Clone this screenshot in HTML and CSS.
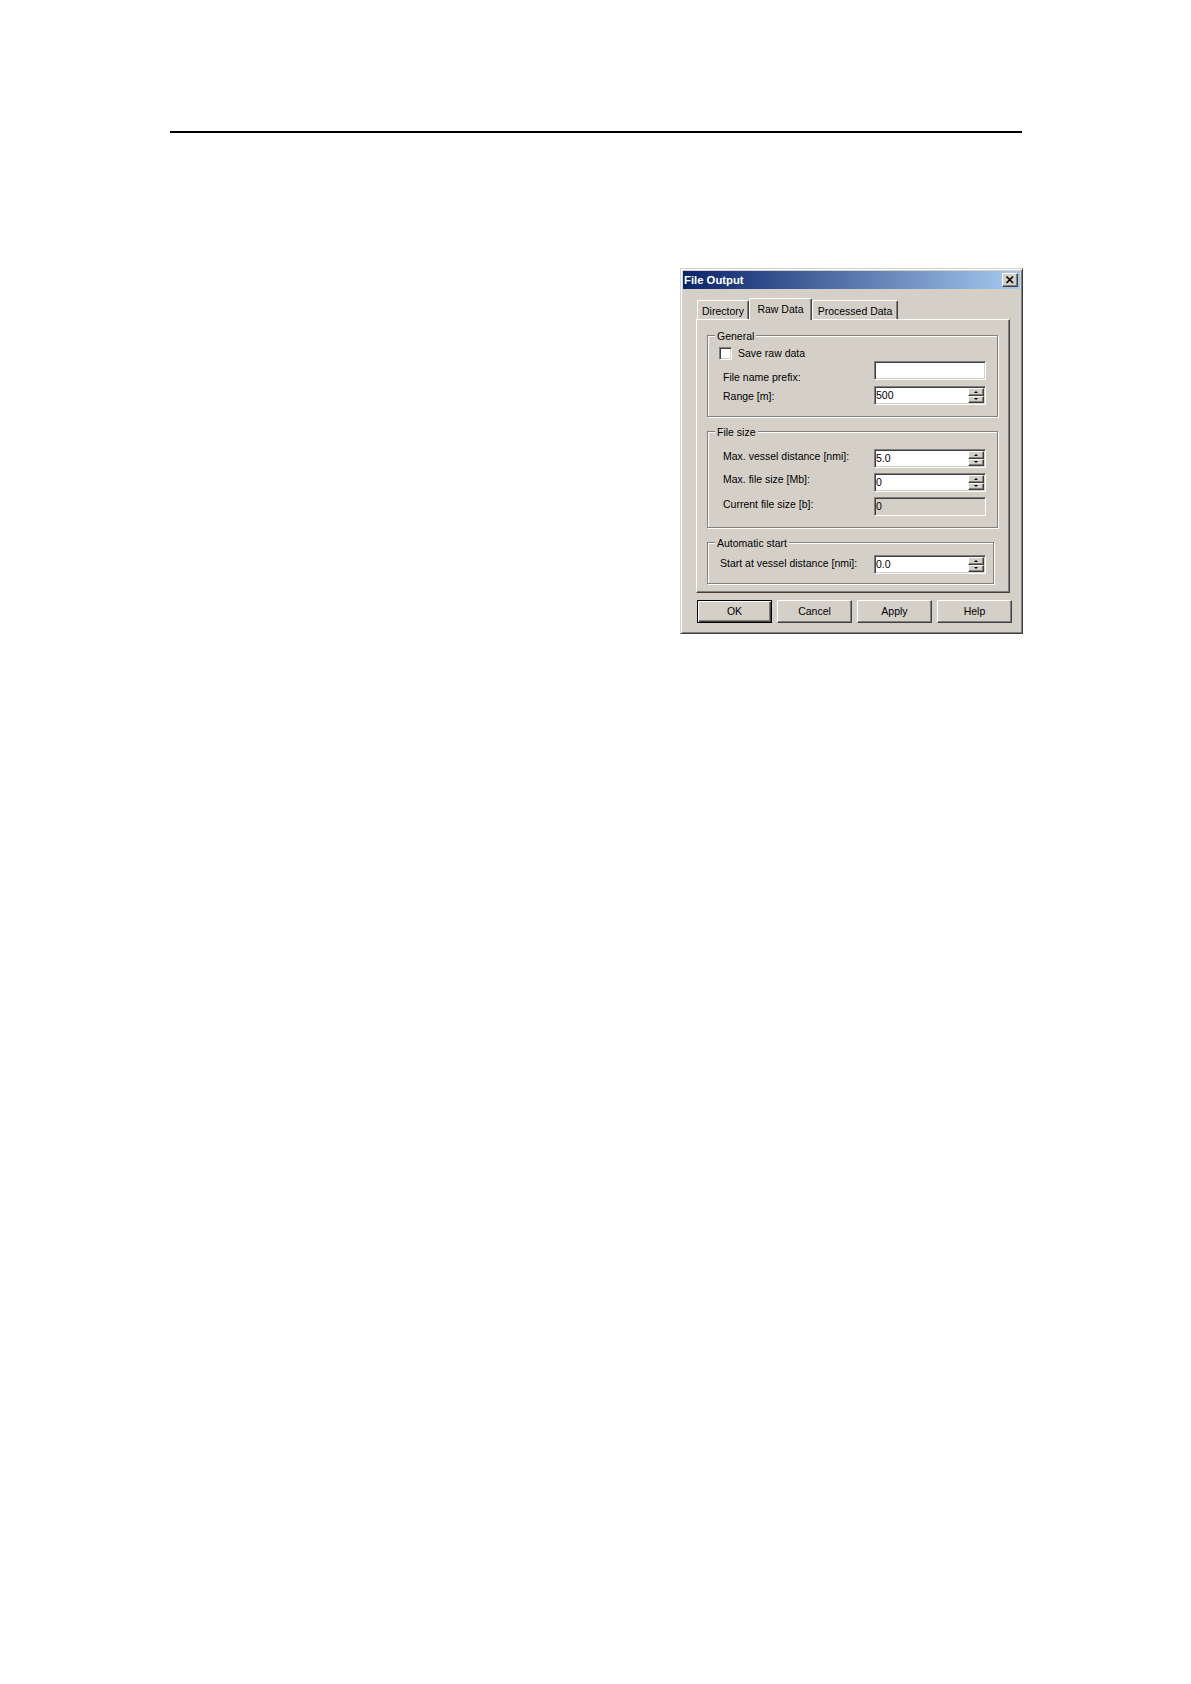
FILE: index.html
```html
<!DOCTYPE html>
<html lang="en">
<head>
<meta charset="utf-8">
<title>File Output</title>
<link rel="stylesheet" href="styles.css">
</head>
<body>
<div class="rule"></div>
<div class="dialog">
  <div class="titlebar">
    <span class="title">File Output</span>
    <span class="close"><svg width="16" height="14" viewBox="0 0 16 14"><path d="M4.5 3.5 L11 10 M11 3.5 L4.5 10" stroke="#000" stroke-width="1.7" fill="none"/></svg></span>
  </div>
  <div class="tabs">
    <div class="tab t-dir">Directory</div>
    <div class="tab active t-raw">Raw Data</div>
    <div class="tab t-proc">Processed Data</div>
  </div>
  <div class="panel">
    <div class="group g-general">
      <div class="legend">General</div>
      <div class="row r-check"><span class="checkbox"></span><span class="lbl chk-lbl">Save raw data</span></div>
      <div class="row r-prefix"><span class="lbl off10">File name prefix:</span><div class="field"><span class="val"></span></div></div>
      <div class="row r-range"><span class="lbl off4">Range [m]:</span><div class="field"><span class="val">500</span><div class="spin"><span class="sb up"><i></i></span><span class="sb down"><i></i></span></div></div></div>
    </div>
    <div class="group g-size">
      <div class="legend">File size</div>
      <div class="row r-vessel"><span class="lbl off1">Max. vessel distance [nmi]:</span><div class="field"><span class="val">5.0</span><div class="spin"><span class="sb up"><i></i></span><span class="sb down"><i></i></span></div></div></div>
      <div class="row r-maxfile"><span class="lbl">Max. file size [Mb]:</span><div class="field"><span class="val">0</span><div class="spin"><span class="sb up"><i></i></span><span class="sb down"><i></i></span></div></div></div>
      <div class="row r-current"><span class="lbl off1">Current file size [b]:</span><div class="field disabled"><span class="val">0</span></div></div>
    </div>
    <div class="group g-auto">
      <div class="legend">Automatic start</div>
      <div class="row r-start"><span class="lbl lbl-wide off2">Start at vessel distance [nmi]:</span><div class="field"><span class="val">0.0</span><div class="spin"><span class="sb up"><i></i></span><span class="sb down"><i></i></span></div></div></div>
    </div>
  </div>
  <div class="buttons">
    <div class="btn default">OK</div>
    <div class="btn">Cancel</div>
    <div class="btn">Apply</div>
    <div class="btn">Help</div>
  </div>
</div>
</body>
</html>
```
FILE: styles.css
```css
html, body {
  margin: 0;
  padding: 0;
  background: #ffffff;
}
body {
  font-family: "Liberation Sans", Arial, sans-serif;
  font-size: 10.5px;
  color: #000;
}
.rule {
  margin-top: 131px;
  margin-left: 170px;
  width: 852px;
  height: 2px;
  background: #000;
}
.dialog {
  margin-top: 135px;
  margin-left: 680px;
  width: 343px;
  height: 366px;
  box-sizing: border-box;
  padding: 2px;
  background: #d4d0c8;
  border: 1px solid;
  border-color: #d4d0c8 #404040 #404040 #d4d0c8;
  box-shadow: inset 1px 1px 0 #ffffff, inset -1px -1px 0 #808080;
  display: flex;
  flex-direction: column;
}
.titlebar {
  height: 18px;
  display: flex;
  align-items: center;
  background: linear-gradient(to right, #0a246a, #a6caf0);
  padding-left: 1px;
}
.title {
  color: #fff;
  font-weight: bold;
  font-size: 11.3px;
  line-height: 18px;
}
.close {
  margin-left: auto;
  margin-right: 2px;
  width: 16px;
  height: 14px;
  box-sizing: border-box;
  background: #d4d0c8;
  border: 1px solid;
  border-color: #fff #404040 #404040 #fff;
  box-shadow: inset -1px -1px 0 #808080;
  display: flex;
  align-items: center;
  justify-content: center;
}
.close svg {
  width: 16px;
  height: 14px;
  flex: none;
  margin-top: -1px;
}
.tabs {
  margin-top: 9px;
  margin-left: 14px;
  height: 21px;
  display: flex;
  align-items: flex-end;
}
.tab {
  height: 19px;
  box-sizing: border-box;
  padding-top: 4px;
  line-height: 13px;
  text-align: center;
  border-top: 1px solid #fff;
  border-left: 1px solid #fff;
  border-right: 1px solid #404040;
  box-shadow: inset -1px 0 0 #808080;
  border-radius: 2px 2px 0 0;
  background: #d4d0c8;
}
.t-dir { width: 52px; }
.t-raw { width: 63px; }
.t-proc { width: 86px; }
.tab.active {
  height: 22px;
  margin-bottom: -1px;
  position: relative;
  z-index: 1;
}
.panel {
  margin-left: 13px;
  width: 314px;
  height: 274px;
  box-sizing: border-box;
  padding: 15px 11px 0 10px;
  border: 1px solid;
  border-color: #fff #404040 #404040 #fff;
  box-shadow: inset -1px -1px 0 #808080;
  display: flex;
  flex-direction: column;
}
.group {
  box-sizing: border-box;
  border: 1px solid #808080;
  box-shadow: inset 1px 1px 0 #fff, 1px 1px 0 #fff;
  display: flex;
  flex-direction: column;
}
.g-general { height: 82px; }
.g-size { height: 97px; margin-top: 14px; }
.g-auto { height: 42px; margin-top: 14px; margin-right: 4px; }
.legend {
  align-self: flex-start;
  margin-top: -6px;
  margin-left: 7px;
  padding: 0 2px;
  line-height: 13px;
  height: 13px;
  background: #d4d0c8;
}
.row {
  display: flex;
  align-items: flex-start;
  height: 19px;
  padding-left: 15px;
  flex: none;
}
.lbl {
  width: 151px;
  line-height: 13px;
  white-space: nowrap;
  flex: none;
}
.lbl-wide { width: 154px; }
.off1 { margin-top: 1px; }
.off2 { margin-top: 2px; }
.off4 { margin-top: 4px; }
.off10 { margin-top: 10px; }
.r-check { height: 13px; margin-top: 4px; padding-left: 11px; }
.chk-lbl { margin-left: 6px; width: auto; }
.r-prefix { margin-top: 1px; }
.r-range { margin-top: 6px; }
.r-vessel { margin-top: 10px; }
.r-maxfile { margin-top: 5px; }
.r-current { margin-top: 5px; }
.r-start { margin-top: 5px; padding-left: 12px; }
.checkbox {
  width: 13px;
  height: 13px;
  box-sizing: border-box;
  background: #fff;
  border: 1px solid;
  border-color: #808080 #fff #fff #808080;
  box-shadow: inset 1px 1px 0 #404040, inset -1px -1px 0 #d4d0c8;
  flex: none;
}
.field {
  width: 112px;
  height: 19px;
  box-sizing: border-box;
  padding: 1px;
  background: #fff;
  border: 1px solid;
  border-color: #808080 #fff #fff #808080;
  box-shadow: inset 1px 1px 0 #404040, inset -1px -1px 0 #d4d0c8;
  display: flex;
  align-items: flex-start;
  flex: none;
}
.field.disabled { background: #d4d0c8; }
.val {
  flex: 1;
  line-height: 13px;
  padding-top: 1px;
  white-space: nowrap;
}
.spin {
  width: 16px;
  height: 15px;
  display: flex;
  flex-direction: column;
  flex: none;
}
.sb {
  flex: 1;
  box-sizing: border-box;
  background: #d4d0c8;
  border: 1px solid;
  border-color: #fff #404040 #404040 #fff;
  box-shadow: inset -1px -1px 0 #808080;
  display: flex;
  align-items: center;
  justify-content: center;
}
.sb i {
  display: block;
  width: 0;
  height: 0;
  border-left: 2px solid transparent;
  border-right: 2px solid transparent;
}
.up i { border-bottom: 2px solid #000; }
.down i { border-top: 2px solid #000; }
.buttons {
  margin-top: 7px;
  margin-left: 14px;
  display: flex;
  gap: 5px;
}
.btn {
  width: 75px;
  height: 23px;
  box-sizing: border-box;
  line-height: 21px;
  text-align: center;
  border: 1px solid;
  border-color: #fff #404040 #404040 #fff;
  box-shadow: inset -1px -1px 0 #808080;
}
.btn.default {
  border-color: #000;
  box-shadow: inset 1px 1px 0 #fff, inset -1px -1px 0 #404040, inset -2px -2px 0 #808080;
}
```
